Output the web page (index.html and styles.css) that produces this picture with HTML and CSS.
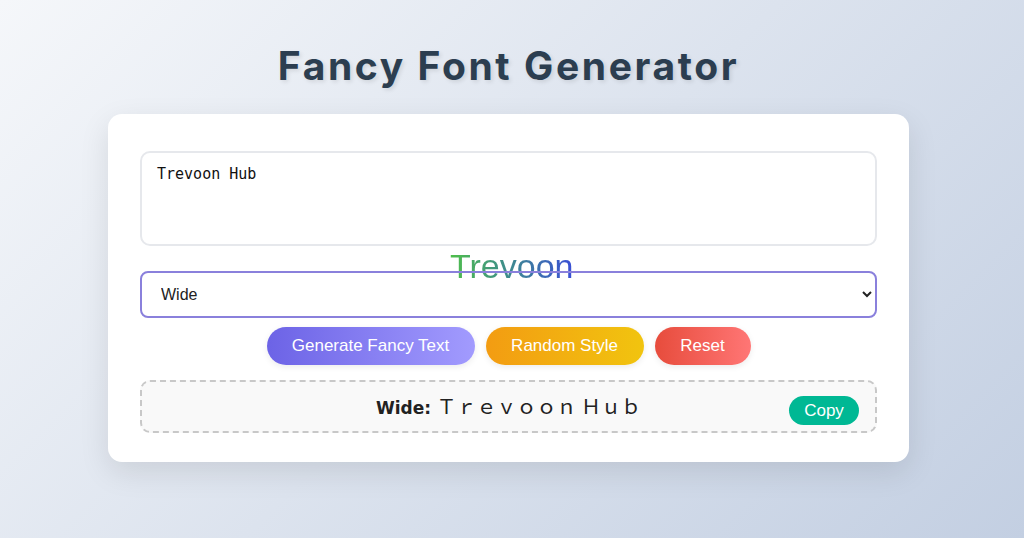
FILE: index.html
```html
<!DOCTYPE html>
<html lang="en">
<head>
<meta charset="utf-8">
<title>Fancy Font Generator</title>
<link rel="stylesheet" href="styles.css">
</head>
<body>
<main class="page">
  <h1 class="title">Fancy Font Generator</h1>
  <section class="card">
    <textarea class="input" spellcheck="false">Trevoon Hub</textarea>
    <div class="select-wrap">
      <span class="brand">Trevoon</span>
      <select class="style-select">
        <option>Wide</option>
        <option>Bold</option>
        <option>Italic</option>
      </select>
    </div>
    <div class="actions">
      <button class="btn btn-generate">Generate Fancy Text</button>
      <button class="btn btn-random">Random Style</button>
      <button class="btn btn-reset">Reset</button>
    </div>
    <div class="output">
      <p class="result"><strong>Wide:</strong> <span class="wide">Ｔｒｅｖｏｏｎ Ｈｕｂ</span></p>
      <button class="copy">Copy</button>
    </div>
  </section>
</main>
</body>
</html>
```

FILE: styles.css
```css
* { box-sizing: border-box; }
html, body { height: 100%; }
body {
  margin: 0;
  padding: 0 7px 0 0;
  background: linear-gradient(135deg, #f5f7fa 0%, #c3cfe2 100%);
  font-family: "Liberation Sans", Arial, sans-serif;
  overflow: hidden;
}
.page {
  width: 801px;
  margin: 0 auto;
  padding-top: 44px;
}
.title {
  margin: 0 0 26px;
  text-align: center;
  font-family: Inter, "Noto Sans", sans-serif;
  font-weight: 700;
  font-size: 39px;
  line-height: 44px;
  letter-spacing: 2.6px;
  color: #2c3e50;
  text-shadow: 2px 2px 4px rgba(0,0,0,0.1);
}
.card {
  background: #fff;
  border-radius: 14px;
  box-shadow: 0 10px 30px rgba(0,0,0,0.1);
  padding: 37px 32px 29px;
}
.input {
  display: block;
  width: 100%;
  height: 95px;
  resize: none;
  border: 2px solid #e6e8ec;
  border-radius: 10px;
  padding: 12px 15px;
  font-family: "DejaVu Sans Mono", monospace;
  font-size: 15px;
  color: #111;
  outline: none;
  margin: 0 0 25px;
}
.select-wrap {
  position: relative;
}
.brand {
  position: absolute;
  left: 310px;
  top: -25px;
  font-family: "Liberation Sans", Arial, sans-serif;
  font-size: 34px;
  line-height: 40px;
  background: linear-gradient(90deg, #4fbf4a 0%, #3e8e8a 45%, #3a4fd6 100%);
  -webkit-background-clip: text;
  background-clip: text;
  color: transparent;
  z-index: 0;
}
.style-select {
  position: relative;
  z-index: 1;
  display: block;
  width: 100%;
  height: 47px;
  border: 2px solid #8a80dc;
  border-radius: 8px;
  background: transparent;
  padding: 0 14px 0 15px;
  font-family: "Liberation Sans", Arial, sans-serif;
  font-size: 16px;
  color: #222;
  outline: none;
}
.actions {
  display: flex;
  justify-content: center;
  gap: 11px;
  margin-top: 9px;
}
.btn {
  border: none;
  height: 38px;
  border-radius: 20px;
  color: #fff;
  font-family: "Liberation Sans", Arial, sans-serif;
  font-size: 17px;
  padding: 0 10px;
  box-shadow: 0 2px 6px rgba(0,0,0,0.08);
}
.btn-generate {
  width: 208px;
  background: linear-gradient(90deg, #6c63e6 0%, #a29bfe 100%);
}
.btn-random {
  width: 158px;
  background: linear-gradient(90deg, #f39c12 0%, #f1c40f 100%);
}
.btn-reset {
  width: 96px;
  background: linear-gradient(90deg, #e74c3c 0%, #ff7675 100%);
}
.output {
  position: relative;
  margin-top: 15px;
  height: 53px;
  border: 2px dashed #c8c8c8;
  border-radius: 10px;
  background: #f9f9f9;
  display: flex;
  align-items: center;
  justify-content: center;
}
.result {
  margin: 0 0 2px;
  font-family: "DejaVu Sans", sans-serif;
  font-size: 17px;
  color: #222;
}
.wide {
  font-family: "Noto Sans CJK SC", sans-serif;
  font-size: 20px;
}
.copy {
  position: absolute;
  right: 16px;
  top: 14px;
  height: 29px;
  width: 70px;
  border: none;
  border-radius: 15px;
  background: #00b894;
  color: #fff;
  font-family: "Liberation Sans", Arial, sans-serif;
  font-size: 17px;
}
```
